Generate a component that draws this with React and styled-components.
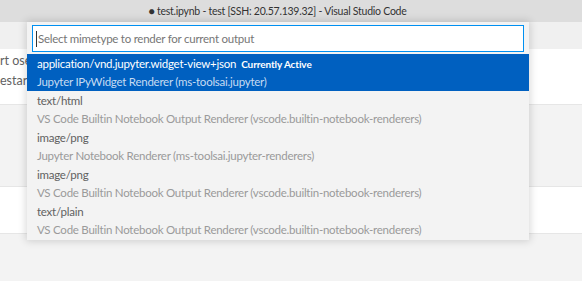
import React from 'react'
import styled, { createGlobalStyle } from 'styled-components'

const GlobalStyle = createGlobalStyle`
    body {
        margin: 0;
        font-family: Lato, "Open Sans", sans-serif;
    }
`

const Window = styled.div`
    position: relative;
    width: 582px;
    height: 281px;
    overflow: hidden;
    background: #f3f3f3;
    display: flex;
    flex-direction: column;
`
const TitleBar = styled.div`
    height: 22px;
    flex: none;
    background: #dddddd;
    display: flex;
    align-items: center;
    justify-content: center;
    padding-right: 27px;
    font-size: 10.5px;
    letter-spacing: -0.25px;
    color: #333333;
    white-space: nowrap;
`
const Toolbar = styled.div`
    height: 27px;
    flex: none;
    background: #f0f0f0;
`
const Cell = styled.div`
    flex: none;
    height: ${p => p.h}px;
    margin-top: ${p => p.gap || 0}px;
    background: #ffffff;
    border-top: ${p => (p.gap ? '1px solid #e6e6e6' : 'none')};
    border-bottom: 1px solid #e6e6e6;
    display: flex;
    flex-direction: column;
    padding-top: 2px;
    box-sizing: border-box;
`
// only the sliver left of the quick pick shows
const CodeLine = styled.div`
    height: 20px;
    line-height: 20px;
    font-size: 12.5px;
    color: #616161;
    white-space: nowrap;
`

const QuickPick = styled.div`
    position: absolute;
    left: 27px;
    top: 22px;
    width: 502px;
    background: #f3f3f3;
    box-shadow: 0 0 8px 1px rgba(0, 0, 0, 0.16);
    padding: 3px 0 1px;
    box-sizing: border-box;
`
const InputBox = styled.div`
    margin: 0 5px;
    height: 27px;
    box-sizing: border-box;
    border: 1px solid #0090f1;
    background: #ffffff;
    display: flex;
    align-items: center;
    padding-left: 3px;
    font-size: 11.5px;
    letter-spacing: -0.25px;
    color: #767676;
`
const Caret = styled.span`
    width: 1px;
    height: 16px;
    background: #333;
    margin-right: 1px;
`
const List = styled.div`
    margin-top: 2px;
`
const Row = styled.div`
    height: 37px;
    padding: 2px 10px 2px;
    box-sizing: border-box;
    background: ${p => (p.active ? '#0060c0' : 'transparent')};
    display: flex;
    flex-direction: column;
    justify-content: space-between;
    white-space: nowrap;
    letter-spacing: -0.25px;
`
const Label = styled.div`
    line-height: 15px;
    font-size: 11.5px;
    color: ${p => (p.active ? '#ffffff' : '#616161')};
`
const Badge = styled.span`
    margin-left: 5px;
    font-size: 10px;
    font-weight: 700;
    letter-spacing: -0.1px;
    color: #ffffff;
`
const Detail = styled.div`
    line-height: 15px;
    font-size: 11.5px;
    color: ${p => (p.active ? '#c6dbf2' : '#9a9a9a')};
`

const items = [
    { label: 'application/vnd.jupyter.widget-view+json', detail: 'Jupyter IPyWidget Renderer (ms-toolsai.jupyter)', active: true },
    { label: 'text/html', detail: 'VS Code Builtin Notebook Output Renderer (vscode.builtin-notebook-renderers)' },
    { label: 'image/png', detail: 'Jupyter Notebook Renderer (ms-toolsai.jupyter-renderers)' },
    { label: 'image/png', detail: 'VS Code Builtin Notebook Output Renderer (vscode.builtin-notebook-renderers)' },
    { label: 'text/plain', detail: 'VS Code Builtin Notebook Output Renderer (vscode.builtin-notebook-renderers)' },
]

const App = () => {
    return (
        <Window>
            <GlobalStyle />
            <TitleBar>● test.ipynb - test [SSH: 20.57.139.32] - Visual Studio Code</TitleBar>
            <Toolbar />
            <Cell h={56}>
                <CodeLine>rt ose</CodeLine>
                <CodeLine>estart</CodeLine>
            </Cell>
            <Cell h={48} gap={81} />
            <QuickPick>
                <InputBox>
                    <Caret />
                    Select mimetype to render for current output
                </InputBox>
                <List>
                    {items.map((it, i) => (
                        <Row key={i} active={it.active}>
                            <Label active={it.active}>
                                {it.label}
                                {it.active && <Badge>Currently Active</Badge>}
                            </Label>
                            <Detail active={it.active}>{it.detail}</Detail>
                        </Row>
                    ))}
                </List>
            </QuickPick>
        </Window>
    )
}

export default App
